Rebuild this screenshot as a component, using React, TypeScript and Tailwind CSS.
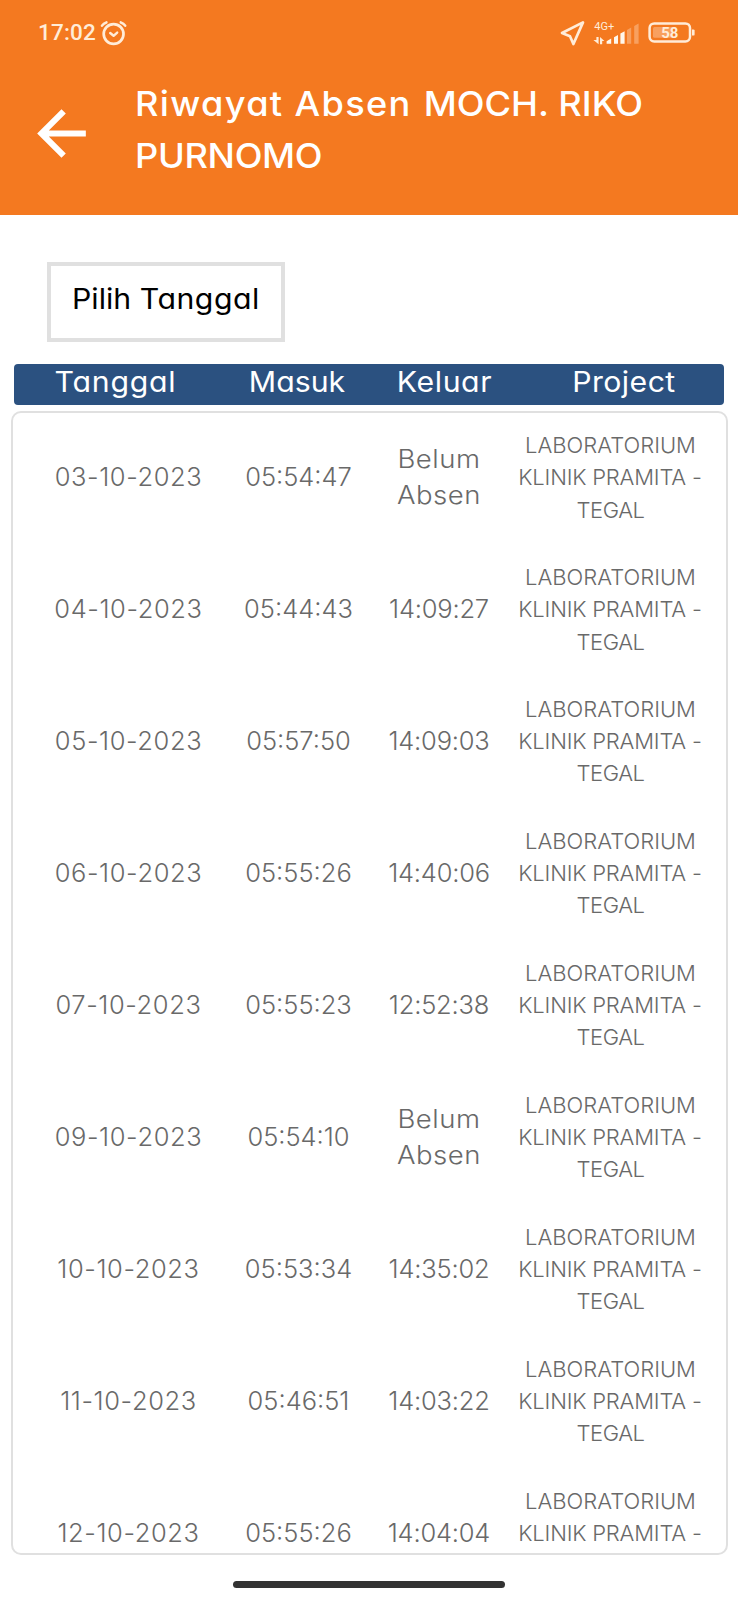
type Absen = {
  tanggal: string;
  masuk: string;
  keluar: string | null;
};

const riwayat: Absen[] = [
  { tanggal: "03-10-2023", masuk: "05:54:47", keluar: null },
  { tanggal: "04-10-2023", masuk: "05:44:43", keluar: "14:09:27" },
  { tanggal: "05-10-2023", masuk: "05:57:50", keluar: "14:09:03" },
  { tanggal: "06-10-2023", masuk: "05:55:26", keluar: "14:40:06" },
  { tanggal: "07-10-2023", masuk: "05:55:23", keluar: "12:52:38" },
  { tanggal: "09-10-2023", masuk: "05:54:10", keluar: null },
  { tanggal: "10-10-2023", masuk: "05:53:34", keluar: "14:35:02" },
  { tanggal: "11-10-2023", masuk: "05:46:51", keluar: "14:03:22" },
  { tanggal: "12-10-2023", masuk: "05:55:26", keluar: "14:04:04" },
];

function AlarmIcon() {
  return (
    <svg className="h-[28px] w-[30px]" viewBox="0 0 30 28" fill="none" stroke="#ffecd8" strokeLinecap="round">
      <circle cx="15.6" cy="15" r="9.9" strokeWidth="2.7" />
      <path d="M4 6.6Q5.6 4.2 8.4 3.4M22.8 3.4Q25.6 4.2 27.2 6.6" strokeWidth="2.6" />
      <path d="M12.2 14L15.6 16.8L19.2 13.6" strokeWidth="2.4" strokeLinejoin="round" />
    </svg>
  );
}

function LocationIcon() {
  return (
    <svg className="h-[28px] w-[28px]" viewBox="0 0 28 28" fill="none" stroke="#ffecd8">
      <path d="M25 3.4L4 14L12 17.2L15.4 25Z" strokeWidth="2.7" strokeLinejoin="round" />
    </svg>
  );
}

function SignalIcon() {
  return (
    <svg className="h-[24px] w-[46px]" viewBox="0 0 46 24" fill="#ffecd8">
      <text x="1.2" y="9.4" fontSize="11" fontFamily="Roboto, sans-serif" textLength="20">
        4G+
      </text>
      {/* data up / down */}
      <path d="M3.4 16H5.6V23.2L.4 19H3.4ZM7 23.2V16L11.4 20H9.2V23.2Z" />
      <path d="M13.6 22.8V20.2L18.2 17.6V22.8ZM21 22.8V16.2L25 14V22.8ZM27.4 22.8V12.6L31.6 10.2V22.8Z" fill="#fff7ec" />
      <path d="M34 22.8V9L38.2 6.6V22.8ZM41.2 22.8V5L45.6 2.6V22.8Z" opacity=".35" />
    </svg>
  );
}

function BatteryIcon() {
  return (
    <svg className="h-[22px] w-[48px]" viewBox="0 0 48 22" fill="none">
      <rect x="1.6" y="1.4" width="40.4" height="18" rx="4.6" stroke="#ffecd8" strokeWidth="2.5" />
      <rect x="5" y="5" width="20" height="10.8" rx="1.5" fill="#ffecd8" opacity=".35" />
      <path d="M44 7.4H45.2Q46.6 7.4 46.6 8.6V12.4Q46.6 13.6 45.2 13.6H44Z" fill="#ffecd8" />
      <text x="13.2" y="15.8" fontSize="15" fontWeight="700" fontFamily="Roboto, sans-serif" fill="#ffecd8">
        58
      </text>
    </svg>
  );
}

function StatusBar() {
  return (
    <div className="flex h-[66px] items-center justify-between pr-[42px] pl-[38px] text-[#ffecd8]">
      <div className="flex items-center">
        <span className="w-[60px] font-[Roboto] text-[22.5px] font-medium tracking-[0.2px]">17:02</span>
        <AlarmIcon />
      </div>
      <div className="flex items-center">
        <LocationIcon />
        <span className="ml-[7px]">
          <SignalIcon />
        </span>
        <span className="ml-[9px]">
          <BatteryIcon />
        </span>
      </div>
    </div>
  );
}

function Header() {
  return (
    <header className="h-[215px] bg-[#f47920] text-white">
      <StatusBar />
      <div className="flex pt-[12px] pl-[25px]">
        <button className="mt-[19px] h-[73px] w-[73px]" aria-label="Kembali">
          <svg className="h-full w-full" viewBox="0 0 24 24" fill="currentColor">
            <path d="M20 11H7.83l5.59-5.59L12 4l-8 8 8 8 1.41-1.41L7.83 13H20v-2z" />
          </svg>
        </button>
        <h1 className="ml-[36.5px] origin-left scale-x-105 text-[34.5px] leading-[52px] font-medium whitespace-nowrap">
          <span className="tracking-[1.25px]">Riwayat Absen </span>
          <span className="pl-[1px]">MOCH. RIKO</span>
          <br />
          <span className="tracking-[-0.3px]">PURNOMO</span>
        </h1>
      </div>
    </header>
  );
}

function TableHeader() {
  return (
    <div className="mx-[14px] mt-[22px] grid h-[41px] grid-cols-[203px_160px_135px_212px] rounded-[4px] bg-[#2b5180] text-center text-[28px] leading-[37px] text-white">
      <span className="scale-x-108 tracking-[0.7px]">Tanggal</span>
      <span className="scale-x-108">Masuk</span>
      <span className="scale-x-108 tracking-[0.55px]">Keluar</span>
      <span className="scale-x-108 pl-[11px] tracking-[0.4px]">Project</span>
    </div>
  );
}

function Row({ item }: { item: Absen }) {
  return (
    <div className="grid h-[131.95px] grid-cols-[231px_109px_172px_171px] items-center pb-[3px] text-center text-[25.5px]">
      <span className="tracking-[0.6px]">{item.tanggal}</span>
      <span>{item.masuk}</span>
      {item.keluar ? (
        <span className="tracking-[-0.2px]">{item.keluar}</span>
      ) : (
        <span className="scale-x-108 leading-[36px] tracking-[0.5px]">
          Belum
          <br />
          Absen
        </span>
      )}
      <span className="-mx-[20px] text-[22px] leading-[32.2px] whitespace-nowrap">
        LABORATORIUM
        <br />
        <span className="pr-[1px] tracking-[-0.2px]">KLINIK PRAMITA -</span>
        <br />
        <span className="tracking-[-0.4px]">TEGAL</span>
      </span>
    </div>
  );
}

export default function App() {
  return (
    <div className="flex h-[1600px] w-[738px] flex-col overflow-hidden bg-white font-[Inter,sans-serif] [font-feature-settings:'cv11']">
      <Header />
      <button className="mt-[47px] ml-[47px] flex h-[80px] w-[238px] items-center border-4 border-[#e0e0e0] pb-[6px] pl-[20.5px] text-[28px] text-black">
        <span className="origin-left scale-x-108 whitespace-pre">
          Pilih <span className="tracking-[0.5px]">Tanggal</span>
        </span>
      </button>
      <TableHeader />
      <div className="mt-[6px] mr-[10px] ml-[11px] h-[1144px] shrink-0 overflow-hidden rounded-[10px] border-2 border-[#e0e0e0] font-[350] text-[#696969]">
        {riwayat.map((item) => (
          <Row key={item.tanggal} item={item} />
        ))}
      </div>
      {/* Gesture bar */}
      <div className="mx-auto mt-[26px] h-[7px] w-[272px] shrink-0 rounded-full bg-[#333333]" />
    </div>
  );
}
